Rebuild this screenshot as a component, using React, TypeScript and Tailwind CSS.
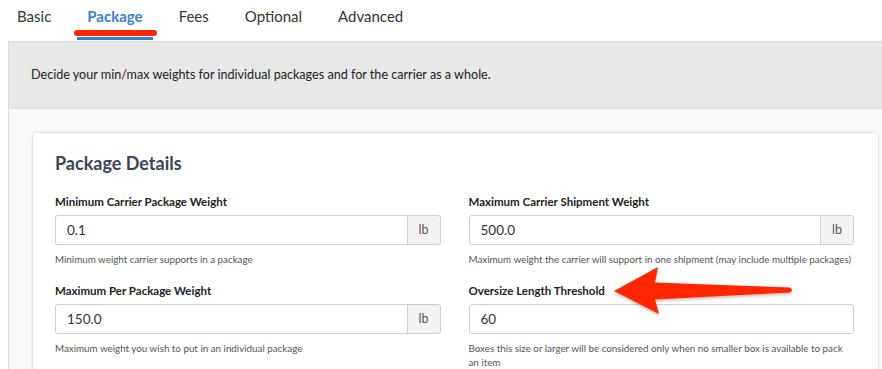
const FONT = { fontFamily: 'Lato, "Open Sans", Arial, sans-serif' };

const TABS = ['Basic', 'Package', 'Fees', 'Optional', 'Advanced'];

function Field({
  label,
  value,
  unit,
  help,
  oneLine,
}: {
  label: string;
  value: string;
  unit?: string;
  help: string;
  oneLine?: boolean;
}) {
  return (
    <div className="flex flex-col">
      <label className="text-[11.5px] font-bold text-[#222] leading-[14px]">{label}</label>
      <div className="mt-[6px] flex h-[30px] rounded-[3px] border border-[#cfcfcf] bg-white">
        <div className="flex flex-1 items-center px-[11px] text-[13.5px] text-[#333]">{value}</div>
        {unit && (
          <div className="flex w-[33px] items-center justify-center rounded-r-[3px] border-l border-[#cfcfcf] bg-[#f3f3f3] text-[12.5px] text-[#555]">
            {unit}
          </div>
        )}
      </div>
      <p
        className={`mt-[7px] text-[9.8px] leading-[14px] text-[#555] ${
          oneLine ? 'whitespace-nowrap' : ''
        }`}
      >
        {help}
      </p>
    </div>
  );
}

export default function App() {
  return (
    <div className="relative h-[369px] w-[882px] overflow-hidden bg-white" style={FONT}>
      <div className="flex h-[41px] gap-4 pl-[7px]">
        {TABS.map((t) => (
          <div
            key={t}
            className={`relative flex items-start px-[10px] pt-[5px] text-[15px] ${
              t === 'Package' ? 'font-bold text-[#3a7fcf]' : 'text-[#333]'
            }`}
          >
            {t}
            {t === 'Package' && (
              <span className="absolute bottom-[1px] left-0 right-0 h-[3px] bg-[#3a7fcf]" />
            )}
          </div>
        ))}
      </div>

      <div className="ml-[8px] w-[900px] border-l border-t border-[#dadada] bg-[#f9f9f9]">
        <div className="flex h-[67px] items-center justify-between border-b border-[#e0e0e0] bg-[#e8e8e8] pl-[22px]">
          <p className="pt-[1px] text-[12.6px] text-[#222]">
            Decide your min/max weights for individual packages and for the carrier as a whole.
          </p>
          <button className="mr-[-20px] h-[31px] w-[40px] rounded-[3px] bg-[#2d5e9a]" />
        </div>

        <div className="pl-[23px] pt-[23px]">
          <div className="w-[847px] rounded-[4px] border border-[#e6e6e6] bg-white pb-6 pl-[22px] pr-[24px] pt-[19px] shadow-[0_0_3px_rgba(0,0,0,0.06)]">
            <h2 className="text-[18px] font-bold leading-[22px] text-[#3b4656]">Package Details</h2>
            <div className="mt-[21px] grid grid-cols-2 gap-x-[28px] gap-y-[18px]">
              <Field
                label="Minimum Carrier Package Weight"
                value="0.1"
                unit="lb"
                help="Minimum weight carrier supports in a package"
                oneLine
              />
              <Field
                label="Maximum Carrier Shipment Weight"
                value="500.0"
                unit="lb"
                help="Maximum weight the carrier will support in one shipment (may include multiple packages)"
                oneLine
              />
              <Field
                label="Maximum Per Package Weight"
                value="150.0"
                unit="lb"
                help="Maximum weight you wish to put in an individual package"
              />
              <Field
                label="Oversize Length Threshold"
                value="60"
                help="Boxes this size or larger will be considered only when no smaller box is available to pack an item"
              />
            </div>
          </div>
        </div>
      </div>

      {/* annotation overlays */}
      <span className="absolute left-[74px] top-[30px] h-[6px] w-[83px] rounded-full bg-[#ff2600]" />
      <svg
        className="pointer-events-none absolute left-0 top-0"
        width="882"
        height="369"
        viewBox="0 0 882 369"
      >
        <defs>
          <filter id="sh" x="-10%" y="-30%" width="120%" height="160%">
            <feDropShadow dx="0" dy="1.5" stdDeviation="1.5" floodColor="#000" floodOpacity="0.3" />
          </filter>
        </defs>
        <path
          d="M614 291 L658 267 L655 282.5 L790 287.5 Q794 290 790 292.5 L655 299.5 L659 314 Z"
          fill="#ff2600"
          filter="url(#sh)"
        />
      </svg>
    </div>
  );
}
